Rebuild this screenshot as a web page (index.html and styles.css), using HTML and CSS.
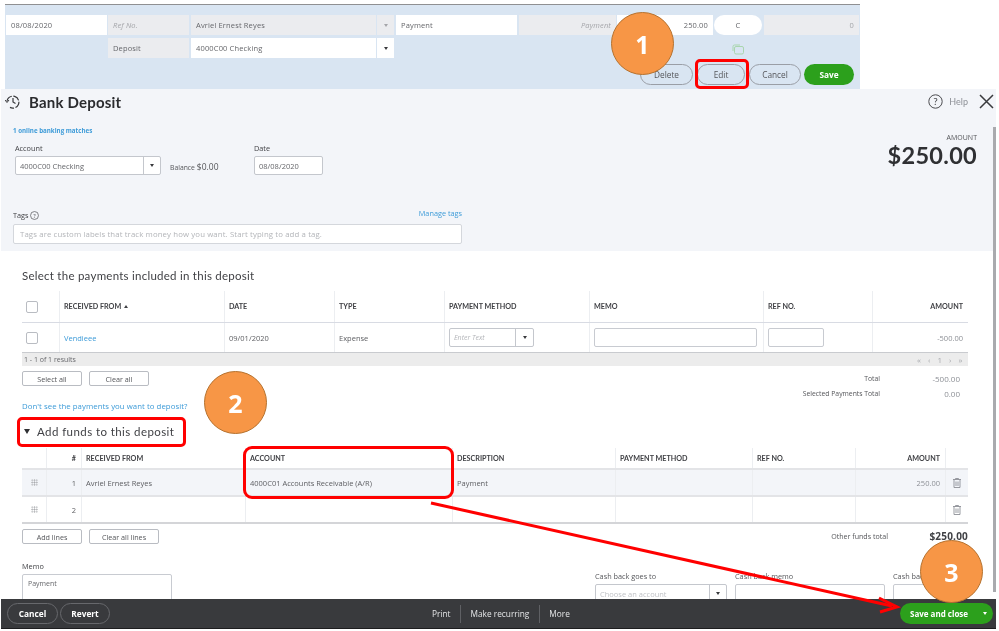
FILE: index.html
```html
<!DOCTYPE html>
<html lang="en">
<head>
<meta charset="utf-8">
<title>Bank Deposit</title>
<link rel="stylesheet" href="styles.css">
</head>
<body>
<div class="page">
  <section class="register">
    <div class="reg-row">
      <div class="f f-date white">08/08/2020</div>
      <div class="f f-ref grey ital dim">Ref No.</div>
      <div class="f f-name grey">Avriel Ernest Reyes</div>
      <div class="f f-arrow grey"><span class="caret dim-caret"></span></div>
      <div class="f f-memo white">Payment</div>
      <div class="f f-pay grey ital dim right">Payment</div>
      <div class="f f-amt white right">250.00</div>
      <div class="f f-c white">C</div>
      <div class="f f-bal grey right dim">0</div>
    </div>
    <div class="reg-row second-row">
      <div class="f f-ref grey">Deposit</div>
      <div class="f f-name white">4000C00 Checking</div>
      <div class="f f-arrow white"><span class="caret"></span></div>
    </div>
    <svg class="copy-icon" width="12" height="11" viewBox="0 0 12 11"><path d="M1 7V2.5A1.5 1.5 0 0 1 2.5 1H8" fill="none" stroke="#a9d6ae"/><rect x="2.5" y="2.5" width="9" height="7.5" rx="1.5" fill="none" stroke="#a9d6ae"/></svg>
    <div class="reg-actions">
      <button class="pill w-delete">Delete</button>
      <button class="pill w-edit">Edit</button>
      <button class="pill w-cancel">Cancel</button>
      <button class="pill-green w-save">Save</button>
    </div>
  </section>

  <main class="modal">
    <div class="scroller">
      <div class="head">
        <div class="title-row">
          <svg class="hist" width="16" height="16" viewBox="0 0 16 16"><path d="M2 7A6 6 0 1 1 5 13.4" fill="none" stroke="#393a3d" stroke-width="1.2" stroke-dasharray="7 1.5"/><path d="M8 4v4l2.500 1.500" fill="none" stroke="#393a3d" stroke-width="1.200"/><path d="M0 6l2 2.500L4 6" fill="none" stroke="#393a3d"/></svg>
          <h1>Bank Deposit</h1>
          <svg class="help-ic" width="15" height="15" viewBox="0 0 15 15"><circle cx="7.500" cy="7.500" r="6.700" fill="none" stroke="#4a4b4f" stroke-width="1"/><text x="7.500" y="10.800" text-anchor="middle" class="qm">?</text></svg>
          <span class="help">Help</span>
          <svg class="close" width="15" height="15" viewBox="0 0 15 15"><path d="M1 1l13 13M14 1L1 14" stroke="#393a3d" stroke-width="1.500"/></svg>
        </div>
        <a class="matches">1 online banking matches</a>
        <div class="acct-row">
          <div class="acct-col">
            <label>Account</label>
            <div class="sel w-acct"><span class="sel-text">4000C00 Checking</span><span class="sel-btn"><span class="caret"></span></span></div>
          </div>
          <div class="balance"><span>Balance</span> <b>$0.00</b></div>
          <div class="date-col">
            <label>Date</label>
            <div class="sel w-hdate"><span class="sel-text">08/08/2020</span></div>
          </div>
          <div class="amount-col">
            <div class="amount-lbl">AMOUNT</div>
            <div class="amount-val">$250.00</div>
          </div>
        </div>
        <div class="tags-top">
          <span class="tags-lbl">Tags</span>
          <svg class="tag-q" width="9" height="9" viewBox="0 0 10 10"><circle cx="5" cy="5" r="4.400" fill="none" stroke="#55565a" stroke-width=".8"/><text x="5" y="7.300" text-anchor="middle" class="qm-s">?</text></svg>
          <a class="manage">Manage tags</a>
        </div>
        <div class="tags-input">Tags are custom labels that track money how you want. Start typing to add a tag.</div>
      </div>

      <div class="body">
        <h2 class="sel-title">Select the payments included in this deposit</h2>
        <div class="t1 t1-head">
          <div class="c"><span class="check"></span></div>
          <div class="c th">RECEIVED FROM <span class="up"></span></div>
          <div class="c th">DATE</div>
          <div class="c th">TYPE</div>
          <div class="c th">PAYMENT METHOD</div>
          <div class="c th">MEMO</div>
          <div class="c th">REF NO.</div>
          <div class="c th right">AMOUNT</div>
        </div>
        <div class="t1 t1-row">
          <div class="c"><span class="check"></span></div>
          <div class="c link">Vendieee</div>
          <div class="c">09/01/2020</div>
          <div class="c">Expense</div>
          <div class="c"><div class="sel w-pm"><span class="sel-text ph">Enter Text</span><span class="sel-btn"><span class="caret"></span></span></div></div>
          <div class="c"><div class="inp w-memo"></div></div>
          <div class="c"><div class="inp w-refno"></div></div>
          <div class="c right soft">-500.00</div>
        </div>
        <div class="pager"><span>1 - 1 of 1 results</span><span class="pages">« ‹ 1 › »</span></div>
        <div class="actions-totals">
          <div class="btns">
            <button class="sq w-59">Select all</button>
            <button class="sq w-59">Clear all</button>
          </div>
          <div class="totals">
            <div class="tot"><span class="tot-l">Total</span><span class="tot-v">-500.00</span></div>
            <div class="tot"><span class="tot-l">Selected Payments Total</span><span class="tot-v">0.00</span></div>
          </div>
        </div>
        <a class="dont">Don't see the payments you want to deposit?</a>
        <h2 class="funds"><span class="tri"></span>Add funds to this deposit</h2>
        <div class="t2 t2-head">
          <div class="c"></div>
          <div class="c th right">#</div>
          <div class="c th">RECEIVED FROM</div>
          <div class="c th">ACCOUNT</div>
          <div class="c th">DESCRIPTION</div>
          <div class="c th">PAYMENT METHOD</div>
          <div class="c th">REF NO.</div>
          <div class="c th right">AMOUNT</div>
          <div class="c"></div>
        </div>
        <div class="t2 t2-row shade">
          <div class="c center"><span class="grip"></span></div>
          <div class="c right">1</div>
          <div class="c">Avriel Ernest Reyes</div>
          <div class="c">4000C01 Accounts Receivable (A/R)</div>
          <div class="c">Payment</div>
          <div class="c"></div>
          <div class="c"></div>
          <div class="c right soft">250.00</div>
          <div class="c center"><svg width="8" height="10" viewBox="0 0 8 10"><path d="M0 1.500h8M2.500 1.500V.5h3v1M1 1.500V9.500h6V1.500M3 3.500v4.500M5 3.500v4.500" fill="none" stroke="#8d9096" stroke-width=".9"/></svg></div>
        </div>
        <div class="t2 t2-row last">
          <div class="c center"><span class="grip"></span></div>
          <div class="c right">2</div>
          <div class="c"></div>
          <div class="c"></div>
          <div class="c"></div>
          <div class="c"></div>
          <div class="c"></div>
          <div class="c"></div>
          <div class="c center"><svg width="8" height="10" viewBox="0 0 8 10"><path d="M0 1.500h8M2.500 1.500V.5h3v1M1 1.500V9.500h6V1.500M3 3.500v4.500M5 3.500v4.500" fill="none" stroke="#8d9096" stroke-width=".9"/></svg></div>
        </div>
        <div class="actions-totals second">
          <div class="btns">
            <button class="sq w-59">Add lines</button>
            <button class="sq w-69">Clear all lines</button>
          </div>
          <div class="other"><span class="other-l">Other funds total</span><b class="other-v">$250.00</b></div>
        </div>
        <div class="bottom">
          <div class="memo-col">
            <label>Memo</label>
            <div class="memo-box">Payment</div>
          </div>
          <div class="cash c1"><label>Cash back goes to</label><div class="sel w-cash"><span class="sel-text ph2">Choose an account</span><span class="sel-btn"><span class="caret"></span></span></div></div>
          <div class="cash c2"><label>Cash back memo</label><div class="inp w-cmemo"></div></div>
          <div class="cash c3"><label>Cash back amount</label><div class="inp w-camt"></div></div>
        </div>
      </div>
      <div class="scrollbar"></div>
    </div>
    <footer class="bar">
      <button class="dark-pill w-fc">Cancel</button>
      <button class="dark-pill w-fr">Revert</button>
      <div class="bar-mid">
        <span>Print</span><i></i><span>Make recurring</span><i></i><span>More</span>
      </div>
      <button class="save-close"><span>Save and close</span><span class="caret white-caret"></span></button>
    </footer>
  </main>

  <div class="hl hl-edit"></div>
  <div class="hl hl-funds"></div>
  <div class="hl hl-account"></div>
  <svg class="arrow" width="999" height="631" viewBox="0 0 999 631"><path d="M431 503L892 606" stroke="#f00" stroke-width="3" fill="none"/><path d="M879 598L897 607L880 612" stroke="#f00" stroke-width="3" fill="none"/></svg>
  <div class="badge b1">1</div>
  <div class="badge b2">2</div>
  <div class="badge b3">3</div>
</div>
</body>
</html>
```
FILE: styles.css
```css
* { box-sizing: border-box; }
html, body { margin: 0; padding: 0; background: #fff; }
body { font-family: "Open Sans", "Lato", sans-serif; color: #55565a; font-size: 7.500px; }
.page { position: relative; width: 999px; height: 631px; overflow: hidden; filter: blur(.3px); }
button { font-family: inherit; padding: 0; margin: 0; cursor: pointer; }
label { display: block; }

/* register */
.register { position: relative; margin: 4px 0 0 5px; width: 855px; height: 85px; background: #d9e5f2; border-top: 1px solid #8f9092; padding: 10px 0 0 1px; }
.reg-row { display: flex; height: 20px; gap: 1px; }
.reg-row.second-row { margin-top: 3px; padding-left: 102px; }
.f { display: flex; align-items: center; height: 100%; padding: 0 5px; font-size: 7.500px; color: #66676b; letter-spacing: .15px; }
.white { background: #fff; }
.grey { background: #ebecef; }
.ital { font-style: italic; }
.dim { color: #a4a5a9; }
.right { justify-content: flex-end; text-align: right; }
.f-date { width: 101px; }
.f-ref { width: 81px; }
.f-name { width: 185px; margin-left: 1px; }
.f-arrow { width: 17px; justify-content: center; padding: 0; }
.f-memo { width: 121px; margin-left: 1px; }
.f-pay { width: 97px; margin-left: 1px; }
.f-amt { width: 96px; }
.f-c { width: 48px; border-radius: 10px; justify-content: center; }
.f-bal { width: 95px; margin-left: 1px; }
.caret { display: inline-block; width: 0; height: 0; border-left: 2.500px solid transparent; border-right: 2.500px solid transparent; border-top: 3px solid #393a3d; }
.dim-caret { border-top-color: #a4a5a9; }
.white-caret { border-top-color: #fff; }
.copy-icon { position: absolute; left: 727px; top: 39px; }
.reg-actions { display: flex; justify-content: flex-end; gap: 3px; padding-right: 6px; margin-top: 6px; }
.pill, .pill-green { height: 21px; border-radius: 11px; font-size: 8.300px; background: transparent; border: 1px solid #9a9ea6; color: #55565a; }
.pill-green { background: #2ca01c; border: 0; color: #fff; font-weight: 700; }
.w-delete { width: 53px; }
.w-edit { width: 48px; margin: 0 1px; }
.w-cancel { width: 52px; }
.w-save { width: 50px; }

/* modal */
.modal { margin-left: 1px; width: 995px; height: 540px; display: flex; flex-direction: column; background: #fff; }
.scroller { position: relative; flex: 1; overflow: hidden; }
.scrollbar { position: absolute; right: 0; top: 38px; width: 3px; height: 465px; background: #a9aaae; }
.head { height: 162px; background: #f3f5f9; padding: 0 0 0 12px; }
.title-row { display: flex; align-items: center; height: 25px; margin-left: -8px; }
.hist { margin-right: 8px; }
h1 { margin: 0; font-family: "Lato", sans-serif; font-size: 15px; font-weight: 700; color: #2a2b2e; letter-spacing: .2px; }
.help-ic { margin-left: auto; }
.qm { font: 10px "Lato", sans-serif; fill: #4a4b4f; }
.qm-s { font: 7px "Lato", sans-serif; fill: #55565a; }
.help { margin: 0 11px 0 6px; font-family: "Lato", sans-serif; font-size: 9px; color: #8d9096; }
.close { margin-right: 2px; }
.matches { display: block; margin-top: 13px; font-size: 6.200px; line-height: 8px; font-weight: 700; color: #3d9bd8; }
.acct-row { position: relative; display: flex; margin: 9px 0 0 2px; height: 33px; }
.acct-col label, .date-col label { font-size: 7.300px; line-height: 9px; margin-bottom: 3px; color: #404145; }
.sel { display: flex; height: 19px; background: #fff; border: 1px solid #c4c7cd; border-radius: 2px; align-items: stretch; }
.sel-text { flex: 1; display: flex; align-items: center; padding-left: 4px; font-size: 7.500px; color: #66676b; white-space: nowrap; overflow: hidden; }
.sel-btn { width: 17px; display: flex; align-items: center; justify-content: center; border-left: 1px solid #c4c7cd; }
.w-acct { width: 146px; }
.w-hdate { width: 69px; }
.balance { margin: 18px 0 0 9px; width: 84px; font-size: 7.500px; color: #55565a; line-height: 9px; }
.balance span { font-size: 6.800px; }
.balance b { font-weight: 400; font-size: 8.500px; }
.amount-col { margin-left: auto; margin-right: 19px; margin-top: -11px; text-align: right; }
.amount-lbl { font-size: 7px; line-height: 9px; color: #55565a; margin-bottom: 1px; }
.amount-val { font-family: "Lato", sans-serif; font-size: 23.500px; line-height: 24px; font-weight: 700; color: #2f3033; letter-spacing: .3px; }
.tags-top { display: flex; align-items: center; width: 449px; margin-top: 32px; height: 12px; }
.tags-lbl { font-size: 7.300px; margin-right: 1px; color: #404145; }
.manage { margin-left: auto; font-size: 7.300px; color: #3d9bd8; position: relative; top: -2px; }
.tags-input { width: 449px; height: 20px; margin-top: 3px; background: #fff; border: 1px solid #d4d7dc; border-radius: 2px; padding-left: 6px; display: flex; align-items: center; font-size: 7.800px; color: #b3b5b9; letter-spacing: .12px; }

.body { padding: 0 0 0 21px; }
.sel-title { margin: 18px 0 0; font-family: "Lato", sans-serif; font-size: 11.500px; line-height: 14px; font-weight: 400; color: #404145; letter-spacing: .25px; }
.t1, .t2 { display: grid; width: 946px; }
.t1 { grid-template-columns: 37px 165px 110px 110px 145px 174px 109px 96px; }
.t2 { grid-template-columns: 24px 35px 164px 207px 163px 137px 103px 90px 23px; }
.c { display: flex; align-items: center; padding: 0 5px 0 4px; font-size: 7.500px; color: #5d5e62; border-left: 1px solid #eceef1; min-width: 0; white-space: nowrap; }
.c:first-child { border-left: 0; }
.c.th { font-family: "Lato", sans-serif; font-weight: 700; color: #404145; font-size: 7.200px; gap: 3px; }
.c.right { justify-content: flex-end; }
.c.center { justify-content: center; padding: 0; }
.soft { color: #8d9096 !important; }
.link { color: #3d9bd8 !important; }
.t1-head { margin-top: 8px; height: 32px; border-bottom: 1px solid #d8dbe3; }
.t1-row { height: 30px; border-bottom: 1px solid #c9cbcf; }
.up { width: 0; height: 0; border-left: 2px solid transparent; border-right: 2px solid transparent; border-bottom: 3px solid #404145; }
.check { display: block; width: 12px; height: 12px; background: #fff; border: 1px solid #b9bcc2; border-radius: 2px; }
.inp { height: 19px; background: #fff; border: 1px solid #c8cbd1; border-radius: 2px; }
.w-pm { width: 85px; }
.w-pm .sel-btn { width: 18px; }
.ph { font-style: italic; color: #b3b5b9; font-size: 7px; }
.w-memo { width: 163px; }
.w-refno { width: 56px; }
.pager { display: flex; justify-content: space-between; align-items: center; width: 946px; height: 13px; background: #ececec; padding: 0 3px 0 2px; font-size: 7px; color: #66676b; }
.pages { color: #a9abaf; font-size: 8px; letter-spacing: 2.500px; }
.actions-totals { display: flex; justify-content: space-between; width: 946px; margin-top: 5px; height: 30px; }
.btns { display: flex; gap: 7px; padding-top: 0; }
.sq { height: 15px; background: #fff; border: 1px solid #b9bcc2; border-bottom-width: 1.500px; border-radius: 2px; font-size: 7.200px; color: #55565a; }
.w-59 { width: 60px; }
.w-69 { width: 70px; }
.totals { margin-right: 8px; }
.tot { display: flex; justify-content: flex-end; height: 15px; align-items: center; }
.tot-l { font-size: 6.800px; color: #55565a; }
.tot-v { width: 80px; text-align: right; font-size: 8px; color: #8d9096; }
.dont { display: block; margin-top: 0; font-size: 7.800px; line-height: 10px; color: #3d9bd8; letter-spacing: .05px; }
.funds { display: flex; align-items: center; margin: 12px 0 0 2px; height: 16px; font-family: "Lato", sans-serif; font-size: 11.500px; font-weight: 400; color: #404145; letter-spacing: .42px; }
.tri { width: 0; height: 0; margin-right: 7px; border-left: 3px solid transparent; border-right: 3px solid transparent; border-top: 5px solid #2f3033; }
.t2-head { margin-top: 9px; height: 22px; border-bottom: 2px solid #e3e4e7; }
.t2-row { height: 27px; border-bottom: 2px solid #e3e4e7; }
.t2-row.last { border-bottom-color: #d4d5d8; }
.shade { background: #f3f5f9; }
.grip { width: 7px; height: 7px; background-image: radial-gradient(#a9abaf 45%, transparent 50%); background-size: 2.330px 2.330px; }
.second { margin-top: 5px; }
.other { display: flex; align-items: center; height: 13px; }
.other-l { font-size: 7.100px; color: #55565a; }
.other-v { width: 80px; text-align: right; font-size: 10px; color: #404145; letter-spacing: .2px; }
.bottom { display: flex; margin-top: 1px; }
.memo-col { width: 573px; padding-top: 2px; }
.memo-col label { font-size: 7.300px; line-height: 9px; color: #404145; }
.memo-box { width: 150px; height: 60px; margin-top: 3px; border: 1px solid #c8cbd1; border-radius: 2px; padding: 4px 5px; font-size: 7px; color: #66676b; }
.cash { padding-top: 12px; }
.cash label { font-size: 7.300px; line-height: 9px; color: #55565a; white-space: nowrap; margin-bottom: 3px; }
.c1 { width: 140px; }
.c2 { width: 158px; }
.c3 { width: 80px; }
.w-cash { width: 132px; }
.ph2 { color: #c0c2c6; }
.w-cmemo { width: 150px; }
.w-camt { width: 72px; }

/* footer */
.bar { display: flex; align-items: center; height: 30px; flex: none; background: #393a3d; border-bottom: 1px solid #1d1d1f; padding: 0 3px 0 6px; gap: 2px; }
.dark-pill { height: 21px; background: transparent; color: #fff; border: 1px solid #67686c; border-radius: 11px; font-size: 8.300px; font-weight: 700; }
.w-fc { width: 51px; }
.w-fr { width: 50px; }
.bar-mid { display: flex; align-items: center; margin-left: 320px; gap: 9.500px; color: #e4e5e7; font-size: 8.300px; }
.bar-mid i { width: 1px; height: 18px; background: #5f6064; }
.save-close { margin-left: auto; width: 93px; height: 21px; border: 0; border-radius: 11px; background: #2ca01c; color: #fff; font-size: 8px; font-weight: 700; display: flex; align-items: center; justify-content: space-between; padding: 0 6px 0 10px; }

/* annotations */
.hl { position: absolute; border: 3px solid #f00; }
.hl-edit { left: 695px; top: 59px; width: 54px; height: 30px; border-radius: 5px; }
.hl-funds { left: 17px; top: 417px; width: 169px; height: 30px; border-radius: 5px; }
.hl-account { left: 243px; top: 446px; width: 211px; height: 53px; border-radius: 9px; }
.arrow { position: absolute; left: 0; top: 0; pointer-events: none; }
.badge { position: absolute; width: 63px; height: 63px; border-radius: 50%; background: #f79646; border: 1px solid #b5722f; color: #fff; font-family: "Open Sans", sans-serif; font-weight: 700; font-size: 25px; display: flex; align-items: center; justify-content: center; }
.b1 { left: 611px; top: 12px; }
.b2 { left: 204px; top: 371px; }
.b3 { left: 920px; top: 540px; }
```
